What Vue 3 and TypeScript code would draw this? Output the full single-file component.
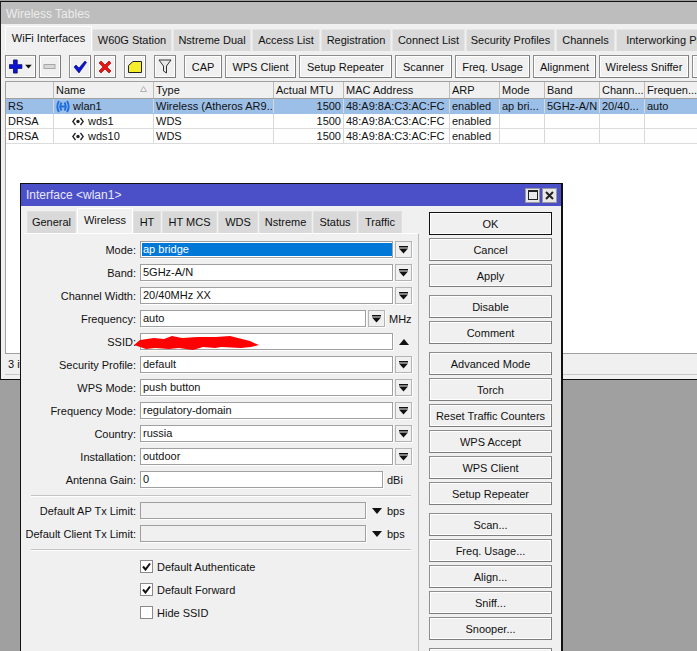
<template>
  <div class="desktop">
    <section class="win">
      <div class="win-title">Wireless Tables</div>
      <div class="tabs win-tabs">
        <div
          v-for="tab in mainTabs"
          :key="tab.label"
          class="tab"
          :class="{ active: tab.label === 'WiFi Interfaces' }"
          :style="{ width: tab.width + 'px' }"
        >{{ tab.label }}</div>
      </div>

      <div class="toolbar">
        <button class="tool add">
          <svg width="23" height="15" viewBox="0 0 24 16">
            <path d="M4.500 1h4v5h5v4h-5v5h-4v-5H0V6h4.500z" fill="#0b14d6" stroke="#00006a" stroke-width="0.8" />
            <path d="M17 6h7l-3.500 4z" fill="#111" />
          </svg>
        </button>
        <button class="tool icon">
          <svg width="14" height="8" viewBox="0 0 14 8"><rect x="1" y="1.500" width="11" height="4" fill="#d8d8d8" stroke="#a8a8a8" /></svg>
        </button>
        <button class="tool icon gap-l">
          <svg width="14" height="14" viewBox="0 0 14 14"><path d="M1 7l2-2 3 3 6-7 1.500 1.500L6 13z" fill="#0b14d6" stroke="#00006a" stroke-width="0.6" /></svg>
        </button>
        <button class="tool icon">
          <svg width="14" height="14" viewBox="0 0 14 14"><path d="M1 3l2-2 4 4 4-4 2 2-4 4 4 4-2 2-4-4-4 4-2-2 4-4z" fill="#ee1111" stroke="#700" stroke-width="0.6" /></svg>
        </button>
        <button class="tool icon gap-l">
          <svg width="14" height="12" viewBox="0 0 14 12"><path d="M.5 4.500L5 .5h8.500v11H.5z" fill="#f5ee2a" stroke="#222" /></svg>
        </button>
        <button class="tool icon gap-l">
          <svg width="14" height="15" viewBox="0 0 14 15"><path d="M1 1h12L8.500 7v7l-3-2V7z" fill="#e8e8e8" stroke="#333" /></svg>
        </button>
        <button
          v-for="item in toolButtons"
          :key="item.label"
          class="tool"
          :class="{ 'gap-l': item.label === 'CAP' }"
          :style="{ width: item.width + 'px' }"
        >{{ item.label }}</button>
      </div>

      <div class="table">
        <div class="row head">
          <div v-for="(col, i) in columns" :key="i" class="cell">
            {{ col }}
            <svg v-if="col === 'Name'" class="sort" width="7" height="6" viewBox="0 0 7 6"><path d="M3.500.5L6.500 5.500H.5z" fill="#f4f4f4" stroke="#b0b0b0" /></svg>
          </div>
        </div>
        <div v-for="row in rows" :key="row.name" class="row" :class="{ selected: row.selected }">
          <div class="cell">{{ row.flags }}</div>
          <div class="cell name-cell" :class="{ child: !row.selected }">
            <svg v-if="row.selected" width="14" height="13" viewBox="0 0 14 13" fill="none" stroke="#1f6fe0" stroke-width="2">
              <path d="M3 1C.8 4 .8 9 3 12M5.500 2.500C4 5 4 8 5.500 10.500M11 1c2.200 3 2.200 8 0 11M8.500 2.500C10 5 10 8 8.500 10.500M5 6.500h4" />
            </svg>
            <svg v-else width="12" height="9" viewBox="0 0 12 9" fill="none" stroke="#222" stroke-width="1.300">
              <path d="M3.500 1L.8 4.500l2.700 3.500M8.500 1l2.700 3.500L8.500 8" />
              <circle cx="6" cy="4.500" r="1.700" fill="#222" stroke="none" />
            </svg>
            <span>{{ row.name }}</span>
          </div>
          <div class="cell">{{ row.type }}</div>
          <div class="cell num">{{ row.mtu }}</div>
          <div class="cell">{{ row.mac }}</div>
          <div class="cell">{{ row.arp }}</div>
          <div class="cell">{{ row.mode }}</div>
          <div class="cell">{{ row.band }}</div>
          <div class="cell">{{ row.chan }}</div>
          <div class="cell">{{ row.freq }}</div>
        </div>
      </div>
      <div class="status">3 items</div>
    </section>

    <section class="dialog">
      <header class="dlg-title">
        <span>Interface &lt;wlan1&gt;</span>
        <div class="dlg-controls">
          <div class="ctl"><i class="ctl-max"></i></div>
          <div class="ctl">
            <svg width="9" height="9" viewBox="0 0 9 9"><path d="M1 1l7 7M8 1L1 8" stroke="#222" stroke-width="2" /></svg>
          </div>
        </div>
      </header>
      <div class="dlg-body">
        <div class="dlg-left">
          <div class="tabs">
            <div
              v-for="tab in dlgTabs"
              :key="tab.label"
              class="tab"
              :class="{ active: tab.label === 'Wireless' }"
              :style="{ width: tab.width + 'px' }"
            >{{ tab.label }}</div>
          </div>
          <div class="panel">
            <div v-for="f in mainFields" :key="f.label" class="form-row">
              <label class="lbl">{{ f.label }}:</label>
              <div class="field" :class="{ sel: f.selected }" :style="{ width: f.width + 'px' }"><span>{{ f.value }}</span></div>
              <button v-if="f.drop" class="drop">
                <svg width="9" height="9" viewBox="0 0 9 9"><path d="M0 1h9v1.500H0zM0 3.500h9L4.500 8.500z" fill="#111" /></svg>
              </button>
              <svg v-if="f.up" class="up" width="10" height="6" viewBox="0 0 10 6"><path d="M5 0l5 6H0z" fill="#111" /></svg>
              <span v-if="f.unit" class="unit">{{ f.unit }}</span>
            </div>
            <div class="divider"></div>
            <div v-for="l in limits" :key="l" class="form-row">
              <label class="lbl">{{ l }}:</label>
              <div class="field empty"></div>
              <svg class="tri" width="10" height="6" viewBox="0 0 10 6"><path d="M0 0h10L5 6z" fill="#111" /></svg>
              <span class="unit">bps</span>
            </div>
            <div class="divider second"></div>
            <div v-for="c in checks" :key="c.label" class="form-row check-row">
              <span class="box">
                <svg v-if="c.on" width="9" height="9" viewBox="0 0 9 9"><path d="M1 4.500l2.500 3L8 1.500" fill="none" stroke="#111" stroke-width="2" /></svg>
              </span>
              <span>{{ c.label }}</span>
            </div>
          </div>
        </div>
        <div class="dlg-buttons">
          <div v-for="(group, i) in buttonGroups" :key="i" class="btn-group">
            <button v-for="b in group" :key="b" class="dlg-btn" :class="{ primary: b === 'OK' }">{{ b }}</button>
          </div>
        </div>
      </div>
      <svg class="scribble" width="126" height="16" viewBox="0 0 126 16">
        <path
          d="M0 10L6 5l14-2 10 1 8-3 10 2 16-1 18 0 14-1 12 3 8 2 4 2 5 2-8 2-10 1-20-1-6 1-12-1-10 3-14-2-10 1-14-1-9 1-6-2z"
          fill="#fe0000"
        />
      </svg>
    </section>
  </div>
</template>

<script setup lang="ts">
interface Tab { label: string; width: number }
interface Field {
  label: string;
  value: string;
  width: number;
  drop?: boolean;
  up?: boolean;
  unit?: string;
  selected?: boolean;
}

const mainTabs: Tab[] = [
  { label: 'WiFi Interfaces', width: 87 },
  { label: 'W60G Station', width: 80 },
  { label: 'Nstreme Dual', width: 78 },
  { label: 'Access List', width: 68 },
  { label: 'Registration', width: 70 },
  { label: 'Connect List', width: 73 },
  { label: 'Security Profiles', width: 89 },
  { label: 'Channels', width: 59 },
  { label: 'Interworking Profiles', width: 120 },
];

const toolButtons: Tab[] = [
  { label: 'CAP', width: 38 },
  { label: 'WPS Client', width: 71 },
  { label: 'Setup Repeater', width: 93 },
  { label: 'Scanner', width: 57 },
  { label: 'Freq. Usage', width: 75 },
  { label: 'Alignment', width: 63 },
  { label: 'Wireless Sniffer', width: 90 },
  { label: 'Snooper', width: 60 },
];

const columns = ['', 'Name', 'Type', 'Actual MTU', 'MAC Address', 'ARP', 'Mode', 'Band', 'Chann...', 'Frequen...'];

const rows = [
  { flags: 'RS', name: 'wlan1', type: 'Wireless (Atheros AR9...', mtu: 1500, mac: '48:A9:8A:C3:AC:FC', arp: 'enabled', mode: 'ap bri...', band: '5GHz-A/N', chan: '20/40...', freq: 'auto', selected: true },
  { flags: 'DRSA', name: 'wds1', type: 'WDS', mtu: 1500, mac: '48:A9:8A:C3:AC:FC', arp: 'enabled', mode: '', band: '', chan: '', freq: '', selected: false },
  { flags: 'DRSA', name: 'wds10', type: 'WDS', mtu: 1500, mac: '48:A9:8A:C3:AC:FC', arp: 'enabled', mode: '', band: '', chan: '', freq: '', selected: false },
];

const dlgTabs: Tab[] = [
  { label: 'General', width: 49 },
  { label: 'Wireless', width: 56 },
  { label: 'HT', width: 28 },
  { label: 'HT MCS', width: 55 },
  { label: 'WDS', width: 40 },
  { label: 'Nstreme', width: 53 },
  { label: 'Status', width: 44 },
  { label: 'Traffic', width: 44 },
];

const mainFields: Field[] = [
  { label: 'Mode', value: 'ap bridge', width: 253, drop: true, selected: true },
  { label: 'Band', value: '5GHz-A/N', width: 253, drop: true },
  { label: 'Channel Width', value: '20/40MHz XX', width: 253, drop: true },
  { label: 'Frequency', value: 'auto', width: 226, drop: true, unit: 'MHz' },
  { label: 'SSID', value: '', width: 253, up: true },
  { label: 'Security Profile', value: 'default', width: 253, drop: true },
  { label: 'WPS Mode', value: 'push button', width: 253, drop: true },
  { label: 'Frequency Mode', value: 'regulatory-domain', width: 253, drop: true },
  { label: 'Country', value: 'russia', width: 253, drop: true },
  { label: 'Installation', value: 'outdoor', width: 253, drop: true },
  { label: 'Antenna Gain', value: '0', width: 243, unit: 'dBi' },
];

const limits = ['Default AP Tx Limit', 'Default Client Tx Limit'];

const checks = [
  { label: 'Default Authenticate', on: true },
  { label: 'Default Forward', on: true },
  { label: 'Hide SSID', on: false },
];

const buttonGroups: string[][] = [
  ['OK', 'Cancel', 'Apply'],
  ['Disable', 'Comment'],
  ['Advanced Mode', 'Torch', 'Reset Traffic Counters', 'WPS Accept', 'WPS Client', 'Setup Repeater'],
  ['Scan...', 'Freq. Usage...', 'Align...', 'Sniff...', 'Snooper...'],
  ['Manual'],
];
</script>

<style>
html, body {
  margin: 0;
  height: 651px;
  overflow: hidden;
  background: #a0a0a0;
}
</style>

<style scoped>
.desktop {
  position: relative;
  width: 697px;
  height: 651px;
  overflow: hidden;
  background: #a0a0a0;
  font-family: "Liberation Sans", Arial, sans-serif;
  font-size: 11px;
  color: #111;
}

button {
  font: inherit;
  color: inherit;
  padding: 0;
}

/* back window */
.win {
  box-sizing: border-box;
  width: 730px;
  height: 379px;
  margin-top: 1px;
  padding-right: 33px;
  border-top: 1px solid #111;
  border-left: 1px solid #222;
  border-bottom: 1px solid #111;
  background: #f0f0f0;
  display: flex;
  flex-direction: column;
}

.win-title {
  height: 22px;
  line-height: 25px;
  padding-left: 5px;
  background: #bdbdbd;
  color: #ececec;
  font-size: 12px;
  flex: none;
}

.tabs {
  display: flex;
  align-items: flex-end;
  height: 25px;
  flex: none;
}

.win-tabs {
  margin: 2px 0 0 4px;
  width: 720px;
}

.tab {
  box-sizing: border-box;
  flex: none;
  height: 22px;
  line-height: 21px;
  margin-right: 1px;
  background: #d9d9d9;
  border: 1px solid #e6e6e6;
  border-bottom: none;
  text-align: center;
  white-space: nowrap;
  overflow: hidden;
}

.tab.active {
  height: 25px;
  line-height: 22px;
  background: #f0f0f0;
  border-color: #fff;
  margin-right: 0;
}

.toolbar {
  display: flex;
  gap: 3px;
  margin: 4px 0 0 4px;
  height: 23px;
  flex: none;
  width: 720px;
}

.tool {
  box-sizing: border-box;
  flex: none;
  height: 23px;
  background: #f0f0f0;
  border: 1px solid #8e8e8e;
  border-right-color: #7d7d7d;
  border-bottom-color: #7d7d7d;
  outline: 1px solid #fff;
  outline-offset: -2px;
  display: flex;
  align-items: center;
  justify-content: center;
  white-space: nowrap;
}

.tool.add {
  width: 31px;
}

.tool.icon {
  width: 22px;
}

.tool.gap-l {
  margin-left: 5px;
}

.table {
  flex: 1;
  margin: 3px 0 0 4px;
  background: #fff;
  border-left: 1px solid #a0a0a0;
  min-height: 0;
}

.row {
  display: grid;
  grid-template-columns: 48px 100px 120px 70px 106px 50px 45px 55px 45px 60px;
  line-height: 14px;
  border-bottom: 1px solid #dcdcdc;
  height: 14px;
}

.row.head {
  height: 16px;
  line-height: 17px;
  background: #f0f0f0;
  border-top: 1px solid #a0a0a0;
  border-bottom: 1px solid #a0a0a0;
}

.row.selected {
  background: #9cbfe8;
  border-bottom-color: #9cbfe8;
}

.cell {
  position: relative;
  box-sizing: border-box;
  padding-left: 2px;
  border-right: 1px solid #d8d8d8;
  white-space: nowrap;
  overflow: hidden;
}

.head .cell {
  border-right-color: #bcbcbc;
}

.cell.num {
  text-align: right;
  padding-right: 2px;
}

.sort {
  position: absolute;
  right: 6px;
  top: 4px;
}

.name-cell {
  display: flex;
  align-items: center;
  gap: 3px;
}

.name-cell.child {
  padding-left: 18px;
  gap: 4px;
}

.status {
  height: 20px;
  line-height: 20px;
  flex: none;
  margin: 0 0 4px 4px;
  padding-left: 3px;
  border-top: 1px solid #a0a0a0;
  border-bottom: 1px solid #c8c8c8;
}

/* dialog */
.dialog {
  position: absolute;
  left: 20px;
  top: 183px;
  width: 543px;
  height: 490px;
  box-sizing: border-box;
  border: 1px solid #111;
  border-right-width: 2px;
  background: #f0f0f0;
}

.dlg-title {
  height: 22px;
  padding: 0 4px 0 5px;
  background: #4c50c8;
  color: #e8e8f8;
  font-size: 12px;
  display: flex;
  align-items: center;
  justify-content: space-between;
}

.dlg-controls {
  display: flex;
  gap: 2px;
}

.ctl {
  box-sizing: border-box;
  width: 15px;
  height: 15px;
  background: #e8e8e8;
  border: 1px solid #9a9a9a;
  display: flex;
  align-items: center;
  justify-content: center;
}

.ctl-max {
  display: block;
  box-sizing: border-box;
  width: 10px;
  height: 10px;
  border: 1px solid #222;
  border-top-width: 2px;
}

.dlg-body {
  display: flex;
  padding-left: 3px;
}

.dlg-left {
  width: 395px;
  padding-top: 2px;
}

.dlg-left .tabs {
  padding-left: 3px;
}

.dlg-left .tab {
  border-color: #e0e0e0;
}

.dlg-left .tab.active {
  border-color: #fff;
}

.panel {
  box-sizing: border-box;
  height: 440px;
  padding: 7px 0 0 1px;
  border-top: 1px solid #fff;
  border-right: 1px solid #bdbdbd;
  display: flex;
  flex-direction: column;
  gap: 6px;
}

.form-row {
  display: flex;
  align-items: center;
  height: 17px;
  flex: none;
}

.lbl {
  width: 111px;
  margin-right: 4px;
  text-align: right;
  white-space: nowrap;
  flex: none;
}

.field {
  box-sizing: border-box;
  height: 17px;
  line-height: 15px;
  padding-left: 2px;
  background: #fff;
  border: 1px solid #a0a0a0;
  box-shadow: 1px 1px 0 #fff;
  white-space: nowrap;
  flex: none;
}

.field.sel span {
  display: block;
  background: #0078d7;
  color: #fff;
  margin: 1px 0 1px -1px;
  padding-left: 1px;
  line-height: 13px;
  height: 13px;
}

.field.empty {
  width: 226px;
  background: #f0f0f0;
}

.drop {
  box-sizing: border-box;
  width: 17px;
  height: 17px;
  margin-left: 2px;
  background: #f0f0f0;
  border: 1px solid #b4b4b4;
  box-shadow: 1px 1px 0 #fff;
  display: flex;
  align-items: center;
  justify-content: center;
  flex: none;
}

.unit {
  margin-left: 4px;
  white-space: nowrap;
}

.up {
  margin-left: 6px;
}

.tri {
  margin: 0 4px 0 6px;
}

.tri + .unit {
  margin-left: 1px;
}

.divider {
  height: 1px;
  margin: 1px 0 0 6px;
  width: 380px;
  background: #c4c4c4;
  box-shadow: 0 1px 0 #fff;
  flex: none;
}

.divider.second {
  margin-bottom: 2px;
}

.check-row {
  padding-left: 115px;
  gap: 4px;
}

.box {
  box-sizing: border-box;
  width: 13px;
  height: 13px;
  background: #fff;
  border: 1px solid #8a8a8a;
  display: flex;
  align-items: center;
  justify-content: center;
  flex: none;
}

.dlg-buttons {
  margin: 6px 0 0 10px;
  display: flex;
  flex-direction: column;
  gap: 8px;
}

.btn-group {
  display: flex;
  flex-direction: column;
  gap: 3px;
}

.dlg-btn {
  box-sizing: border-box;
  width: 123px;
  height: 23px;
  background: #f0f0f0;
  border: 1px solid #8e8e8e;
  border-right-color: #7d7d7d;
  border-bottom-color: #7d7d7d;
  outline: 1px solid #fff;
  outline-offset: -2px;
}

.dlg-btn.primary {
  border-color: #111;
}

.scribble {
  position: absolute;
  left: 113px;
  top: 151px;
}
</style>
